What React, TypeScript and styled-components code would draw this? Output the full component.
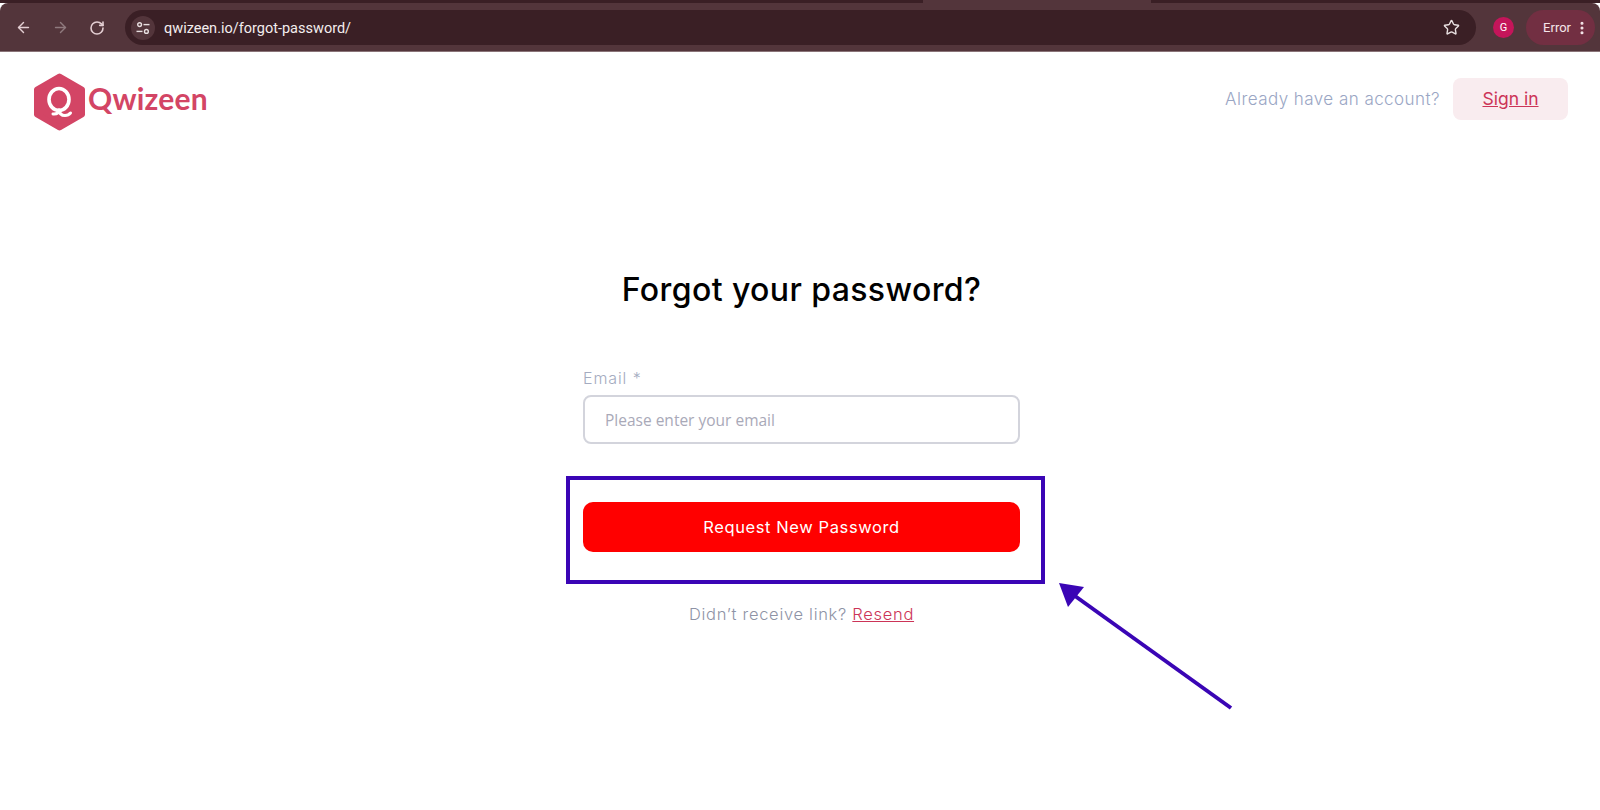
import React from "react";
import styled, { createGlobalStyle } from "styled-components";
import { ArrowLeft, ArrowRight, RotateCw, Star, EllipsisVertical } from "lucide-react";

const GlobalStyle = createGlobalStyle`
  html, body {
    margin: 0;
    padding: 0;
    background: #fff;
    overflow: hidden;
  }
`;

const App = () => {
  return (
    <Page>
      <GlobalStyle />
      <TabStrip>
        <TabGap />
      </TabStrip>
      <Toolbar>
        <NavButton $dim={false}>
          <ArrowLeft size={17} />
        </NavButton>
        <NavButton $dim>
          <ArrowRight size={17} />
        </NavButton>
        <NavButton $dim={false}>
          <RotateCw size={16} strokeWidth={2.4} />
        </NavButton>
        <AddressBar>
          <SiteIcon>
            <svg width="14" height="14" viewBox="0 0 14 14" fill="none" stroke="#e8dfe0" strokeWidth="1.4">
              <circle cx="3.6" cy="3.6" r="1.9" />
              <path d="M7.500 3.600H13.500" />
              <circle cx="10.400" cy="10.400" r="1.900" />
              <path d="M0.500 10.400H6.500" />
            </svg>
          </SiteIcon>
          <Url>qwizeen.io/forgot-password/</Url>
          <StarWrap>
            <Star size={17} />
          </StarWrap>
        </AddressBar>
        <Avatar>G</Avatar>
        <ErrorChip>
          Error
          <EllipsisVertical size={16} strokeWidth={2.6} />
        </ErrorChip>
      </Toolbar>
      <Header>
        <Logo>
          <svg width="53" height="58" viewBox="0 0 53 58">
            <path
              d="M26.500 3.500 L49 16.500 V41.500 L26.500 54.500 L4 41.500 V16.500 Z"
              fill="#d34565"
              stroke="#d34565"
              strokeWidth="6"
              strokeLinejoin="round"
            />
            <ellipse cx="26" cy="26.500" rx="10" ry="11" fill="none" stroke="#fff" strokeWidth="3.600" />
            <path d="M26 37 Q26.500 42.500 32 42.500 Q35.500 42.500 37.500 40" fill="none" stroke="#fff" strokeWidth="3" strokeLinecap="round" />
            <path d="M26 37 Q25.500 41.500 20 41" fill="none" stroke="#fff" strokeWidth="3" strokeLinecap="round" />
          </svg>
          <LogoText>Qwizeen</LogoText>
        </Logo>
        <HeaderRight>
          <HeaderNote>Already have an account?</HeaderNote>
          <SignIn href="#">Sign in</SignIn>
        </HeaderRight>
      </Header>
      <Main>
        <Title>Forgot your password?</Title>
        <Form>
          <Label>Email *</Label>
          <Input placeholder="Please enter your email" />
          <ButtonArea>
            <HighlightBox />
            <Arrow width="190" height="140" viewBox="0 0 190 140">
              <path d="M178 128 L22 16" stroke="#3a05b5" strokeWidth="4" fill="none" />
              <path d="M6 3 L31 7 L15 27 Z" fill="#3a05b5" />
            </Arrow>
            <Submit type="button">Request New Password</Submit>
          </ButtonArea>
          <Resend>
            Didn’t receive link? <ResendLink href="#">Resend</ResendLink>
          </Resend>
        </Form>
      </Main>
    </Page>
  );
};

export default App;

const sans = `"Inter", "Liberation Sans", sans-serif`;

const Page = styled.div`
  width: 1600px;
  height: 810px;
  background: #fff;
  font-family: ${sans};
  overflow: hidden;
`;

const TabStrip = styled.div`
  height: 3px;
  background: #3a1f25;
  display: flex;
  justify-content: flex-start;
  padding-left: 923px;
`;

const TabGap = styled.div`
  width: 228px;
  height: 3px;
  background: #53353b;
`;

const Toolbar = styled.div`
  height: 49px;
  background: #53353b;
  border-bottom: 1px solid #8a7478;
  box-sizing: border-box;
  border-radius: 8px 8px 0 0;
  display: flex;
  align-items: center;
  padding: 1px 5px 0 14px;
`;

const NavButton = styled.div<{ $dim: boolean }>`
  width: 18px;
  height: 18px;
  margin-right: 19px;
  display: flex;
  align-items: center;
  justify-content: center;
  color: ${(p) => (p.$dim ? "#8f7a7e" : "#e3ced2")};
`;

const AddressBar = styled.div`
  flex: 1;
  height: 35px;
  border-radius: 18px;
  background: #3a1f25;
  display: flex;
  align-items: center;
  padding: 0 16px 0 6px;
`;

const SiteIcon = styled.div`
  width: 24px;
  height: 24px;
  border-radius: 50%;
  background: #53353b;
  display: flex;
  align-items: center;
  justify-content: center;
  margin-right: 9px;
`;

const Url = styled.div`
  flex: 1;
  padding-top: 1px;
  font-family: "Roboto", sans-serif;
  font-size: 14.500px;
  color: #f3edee;
`;

const StarWrap = styled.div`
  display: flex;
  color: #e8dfe0;
`;

const Avatar = styled.div`
  width: 21px;
  height: 21px;
  margin: 0 12px 0 17px;
  border-radius: 50%;
  background: #c4155a;
  color: #fff;
  font-family: "Roboto", sans-serif;
  font-size: 11px;
  display: flex;
  align-items: center;
  justify-content: center;
`;

const ErrorChip = styled.div`
  width: 69px;
  height: 35px;
  box-sizing: border-box;
  border-radius: 18px;
  background: #722f42;
  color: #f5e6ea;
  font-family: "Roboto", sans-serif;
  font-size: 13px;
  display: flex;
  align-items: center;
  justify-content: flex-end;
  padding-right: 5px;
  gap: 3px;
`;

const Header = styled.header`
  height: 94px;
  display: flex;
  align-items: center;
  justify-content: space-between;
  padding: 0 32px 0 33px;
`;

const Logo = styled.div`
  display: flex;
  align-items: center;
  gap: 2px;
  margin-top: 6px;
`;

const LogoText = styled.span`
  font-family: "Lato", sans-serif;
  font-size: 30px;
  font-weight: 700;
  color: #d34565;
  letter-spacing: 0.2px;
  margin-top: -8px;
`;

const HeaderRight = styled.div`
  display: flex;
  align-items: center;
  gap: 13px;
`;

const HeaderNote = styled.span`
  font-size: 17px;
  font-weight: 300;
  letter-spacing: 0.45px;
  margin-top: -1px;
  color: #9aa6c4;
`;

const SignIn = styled.a`
  width: 115px;
  height: 42px;
  border-radius: 8px;
  background: #f9ecef;
  color: #cc3457;
  font-size: 17.500px;
  font-weight: 400;
  padding-bottom: 2px;
  box-sizing: border-box;
  display: flex;
  align-items: center;
  justify-content: center;
`;

const Main = styled.main`
  display: flex;
  flex-direction: column;
  align-items: center;
  padding: 124px 0 0 3px;
`;

const Title = styled.h1`
  margin: 0;
  font-size: 32px;
  line-height: 40px;
  font-weight: 450;
  letter-spacing: 0.4px;
  color: #000;
`;

const Form = styled.form`
  width: 437px;
  margin-top: 58px;
  display: flex;
  flex-direction: column;
`;

const Label = styled.label`
  font-size: 16px;
  font-weight: 300;
  letter-spacing: 0.9px;
  line-height: 20px;
  color: #a4abc0;
  margin-bottom: 7px;
`;

const Input = styled.input`
  height: 49px;
  box-sizing: border-box;
  border: 2px solid #d3d4dc;
  border-radius: 8px;
  padding: 0 20px;
  font-family: "Open Sans", sans-serif;
  font-size: 15.500px;
  outline: none;

  &::placeholder {
    color: #a9a9b8;
    opacity: 1;
  }
`;

const ButtonArea = styled.div`
  position: relative;
  margin-top: 58px;
`;

const HighlightBox = styled.div`
  position: absolute;
  left: -17px;
  right: -25px;
  top: -26px;
  bottom: -32px;
  border: 4px solid #3a05b5;
`;

const Arrow = styled.svg`
  position: absolute;
  left: 470px;
  top: 78px;
`;

const Submit = styled.button`
  position: relative;
  width: 100%;
  height: 50px;
  border: none;
  border-radius: 10px;
  background: #ff0000;
  color: #fff;
  font-family: ${sans};
  font-size: 16.500px;
  font-weight: 400;
  letter-spacing: 0.6px;
`;

const Resend = styled.p`
  margin: 52px 0 0;
  text-align: center;
  font-size: 16.500px;
  font-weight: 300;
  letter-spacing: 0.7px;
  line-height: 20px;
  color: #8e93a6;
`;

const ResendLink = styled.a`
  color: #cc3457;
`;
